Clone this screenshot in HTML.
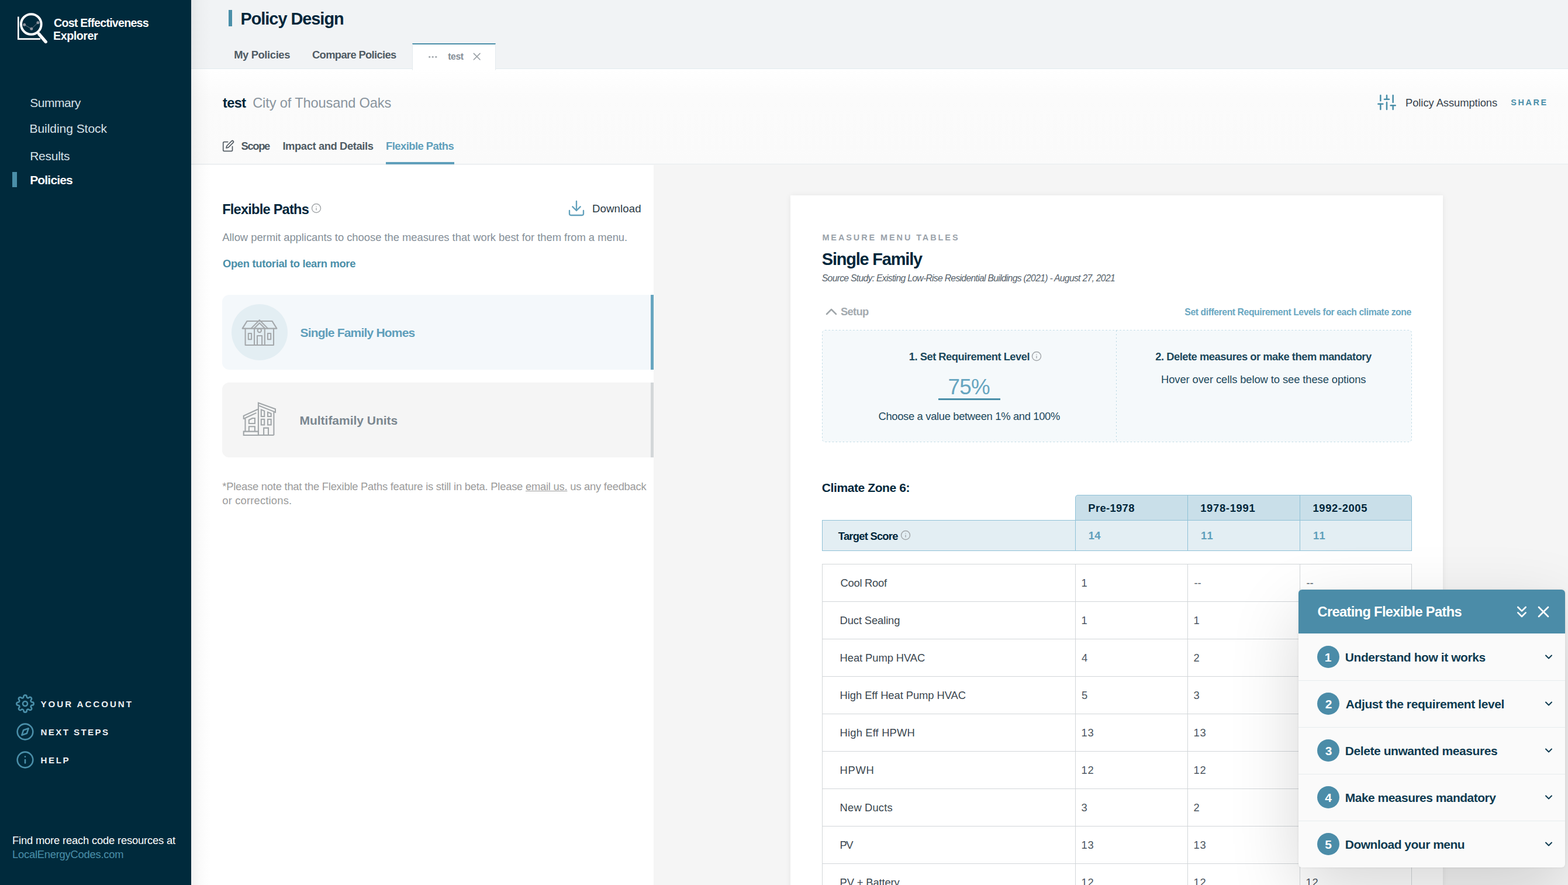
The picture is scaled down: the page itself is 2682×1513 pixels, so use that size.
<!DOCTYPE html>
<html lang="en">
<head>
<meta charset="utf-8">
<title>Policy Design - Cost Effectiveness Explorer</title>
<style>
*{box-sizing:border-box}
html,body{margin:0;padding:0;width:2682px;height:1513px;overflow:hidden;background:#f5f5f5}
.page{position:relative;width:2682px;height:1513px;overflow:hidden;background:#f5f5f5;font-family:"Liberation Sans",sans-serif}
.t{position:absolute;white-space:nowrap;margin:0;padding:0;font-weight:400;text-decoration:none;display:block}
.abs{position:absolute}
ul,ol{list-style:none;margin:0;padding:0}
h1,h2,h3,h4,p{margin:0}
a{color:inherit}
button{font:inherit;border:0;background:none;padding:0;margin:0}
</style>
</head>
<body>
<div class="page">
<header class="abs" style="left:327px;top:0;width:2355px;height:118px;z-index:1;background:#f1f3f5;border-bottom:1px solid #e1eaef"><div style="position:absolute;left:64.00px;top:17.00px;width:6.20px;height:28.00px;background:#4a8fa9;"></div><h1 class="t" style="left:84.50px;top:17.50px;font-size:28.89px;line-height:29px;color:#00263a;font-weight:700;letter-spacing:-1.018px;">Policy Design</h1><nav><a class="t" style="left:73.20px;top:84.00px;font-size:18.39px;line-height:19px;color:#4f5b64;font-weight:700;letter-spacing:-0.387px;">My Policies</a><a class="t" style="left:207.00px;top:84.00px;font-size:18.39px;line-height:19px;color:#4f5b64;font-weight:700;letter-spacing:-0.666px;">Compare Policies</a><div style="position:absolute;left:378.00px;top:74.00px;width:143.00px;height:46.00px;background:#fff;border-top:2.5px solid #4a8fa9;border-left:1px solid #e4eaee;border-right:1px solid #e4eaee;"></div><svg class="abs" style="left:404px;top:92px" width="20" height="10" viewBox="0 0 20 10"><circle cx="3.7" cy="5.3" r="1.6" fill="#a3a9ae"/><circle cx="9.2" cy="5.3" r="1.6" fill="#a3a9ae"/><circle cx="14.8" cy="5.3" r="1.6" fill="#a3a9ae"/></svg><a class="t" style="left:439.30px;top:89.20px;font-size:15.76px;line-height:16px;color:#848e96;font-weight:700;letter-spacing:-0.455px;">test</a><svg style="position:absolute;left:478.00px;top:86.00px;" width="21.33" height="21.33" viewBox="0 0 24 24.000" fill="none" stroke="#9aa1a6" stroke-width="1.9" stroke-linecap="round" stroke-linejoin="round"><line x1="18" y1="6" x2="6" y2="18"/><line x1="6" y1="6" x2="18" y2="18"/></svg></nav></header>
<section class="abs" style="left:327px;top:118px;width:2355px;height:163px;background:linear-gradient(#ffffff 0%,#fbfbfb 30%,#fafafa 100%);border-bottom:1px solid #e6ebee"><h2 class="t" style="left:54.00px;top:45.80px;font-size:23.64px;line-height:24px;color:#00263a;font-weight:700;letter-spacing:-0.649px;">test</h2><div class="t" style="left:105.20px;top:45.80px;font-size:23.64px;line-height:24px;color:#8a959e;letter-spacing:-0.139px;">City of Thousand Oaks</div><nav><svg style="position:absolute;left:53.30px;top:121.30px;" width="21.00" height="21.00" viewBox="0 0 24 24.000" fill="none" stroke="#555e66" stroke-width="2" stroke-linecap="round" stroke-linejoin="round"><path d="M11 4H4a2 2 0 0 0-2 2v14a2 2 0 0 0 2 2h14a2 2 0 0 0 2-2v-7"/><path d="M18.5 2.5a2.121 2.121 0 0 1 3 3L12 15l-4 1 1-4 9.5-9.5z"/></svg><a class="t" style="left:85.50px;top:122.00px;font-size:18.39px;line-height:19px;color:#4f5b64;font-weight:700;letter-spacing:-1.356px;">Scope</a><a class="t" style="left:156.40px;top:122.00px;font-size:18.39px;line-height:19px;color:#4f5b64;font-weight:700;letter-spacing:-0.402px;">Impact and Details</a><a class="t" style="left:333.00px;top:122.00px;font-size:18.39px;line-height:19px;color:#5f9fbb;font-weight:700;letter-spacing:-0.527px;">Flexible Paths</a><div style="position:absolute;left:333.00px;top:159.00px;width:117.00px;height:4.00px;background:#5f9fbb;"></div></nav><svg style="position:absolute;left:2029.00px;top:41.00px;" width="32.00" height="32.00" viewBox="0 0 24 24.000" fill="none" stroke="#4a8fa9" stroke-width="1.9" stroke-linecap="round" stroke-linejoin="round"><line x1="4" y1="21" x2="4" y2="14"/><line x1="4" y1="10" x2="4" y2="3"/><line x1="12" y1="21" x2="12" y2="12"/><line x1="12" y1="8" x2="12" y2="3"/><line x1="20" y1="21" x2="20" y2="16"/><line x1="20" y1="12" x2="20" y2="3"/><line x1="1" y1="14" x2="7" y2="14"/><line x1="9" y1="8" x2="15" y2="8"/><line x1="17" y1="16" x2="23" y2="16"/></svg><a class="t" style="left:2077.00px;top:47.90px;font-size:18.39px;line-height:19px;color:#36424c;letter-spacing:-0.066px;">Policy Assumptions</a><a class="t" style="left:2257.20px;top:50.00px;font-size:14.45px;line-height:15px;color:#4a8fa9;font-weight:700;letter-spacing:2.598px;">SHARE</a></section>
<main>
<section class="abs" style="left:327px;top:281px;width:791px;height:1232px;background:linear-gradient(#f5f5f5 1px,#fff 1px)"><h3 class="t" style="left:53.20px;top:65.10px;font-size:23.64px;line-height:24px;color:#00263a;font-weight:700;letter-spacing:-0.787px;">Flexible Paths</h3><svg style="position:absolute;left:205.40px;top:66.25px;" width="18.00" height="18.00" viewBox="0 0 24 24.000" fill="none" stroke="#a2a6a9" stroke-width="1.9" stroke-linecap="round" stroke-linejoin="round"><circle cx="12" cy="12" r="10"/><line x1="12" y1="16" x2="12" y2="12"/><line x1="12" y1="8" x2="12.01" y2="8"/></svg><svg style="position:absolute;left:643.00px;top:58.50px;" width="32.00" height="32.00" viewBox="0 0 24 24.000" fill="none" stroke="#62a1bc" stroke-width="1.75" stroke-linecap="round" stroke-linejoin="round"><path d="M21 15v4a2 2 0 0 1-2 2H5a2 2 0 0 1-2-2v-4"/><polyline points="7 10 12 15 17 10"/><line x1="12" y1="15" x2="12" y2="3"/></svg><button class="t" style="left:686.00px;top:65.60px;font-size:18.67px;line-height:19px;color:#2b3a45;letter-spacing:0.101px;font-family:'Liberation Sans',sans-serif;">Download</button><p class="t" style="left:53.30px;top:115.00px;font-size:18.39px;line-height:19px;color:#858f98;letter-spacing:-0.020px;">Allow permit applicants to choose the measures that work best for them from a menu.</p><a class="t" style="left:54.00px;top:159.90px;font-size:18.39px;line-height:19px;color:#4a8fa9;font-weight:700;letter-spacing:-0.324px;">Open tutorial to learn more</a><ul><li><div style="position:absolute;left:53.25px;top:223.00px;width:737.75px;height:128.00px;background:#f4f8fb;border-radius:12px 0 0 12px;border-right:5px solid #67a6c0;"></div><div style="position:absolute;left:69.00px;top:239.00px;width:96.00px;height:96.00px;background:#e3eef3;border-radius:50%;"></div><svg class="abs" style="left:83px;top:261px" width="68" height="52" viewBox="410 542 68 52" fill="none" stroke="#a4a8ab" stroke-width="2.05" stroke-linejoin="round" stroke-linecap="round"><path d="M422.6 548.9H465.4L473.4 561.6H414.6Z"/><path d="M429.6 561.4L443.8 547.2L458 561.4"/><path d="M435 590V561.2L443.8 552.2L452.8 561.2V590"/><path d="M419.6 561.8V590H468V561.8"/><circle cx="443.8" cy="564.9" r="3.2"/><path d="M440 590V574H448.1V590"/><rect x="424.8" y="570" width="5.3" height="10.3"/><rect x="457.9" y="570" width="5.3" height="10.3"/></svg><a class="t" style="left:186.50px;top:276.50px;font-size:21.01px;line-height:21px;color:#5f9fbb;font-weight:700;letter-spacing:-0.808px;">Single Family Homes</a></li><li><div style="position:absolute;left:53.25px;top:373.00px;width:737.75px;height:128.00px;background:#f5f5f5;border-radius:12px 0 0 12px;border-right:5px solid #d3d7d9;"></div><svg class="abs" style="left:85px;top:403px" width="64" height="64" viewBox="412 684 64 64" fill="none" stroke="#a1a6a9" stroke-width="2.05" stroke-linejoin="miter" stroke-linecap="butt"><path d="M441.9 743.9V688.8L471 699.2V704.9L468.4 704"/><path d="M443.1 693.6L468.4 703.6V743.9"/><path d="M441 699.7L416.7 710.9V715.8H419.5"/><path d="M438.4 705.9L418.6 715"/><path d="M419.5 715.5V737.6"/><path d="M416.7 737.6H441.9V743.9H416.7Z"/><path d="M441.9 743.9H468.4"/><path d="M425.8 718L431.8 715H435.9V723.9H425.8Z"/><path d="M425.8 737.4V729.2H435.9V737.4"/><path d="M446.8 700.4L452.2 702.6V712H446.8Z"/><path d="M458 704.6L463.7 707V712H458Z"/><rect x="446.8" y="716.8" width="5.4" height="9.6"/><rect x="458" y="716.8" width="5.7" height="9.6"/><path d="M451.1 743.9V731.6H459V743.9"/></svg><a class="t" style="left:185.50px;top:426.75px;font-size:21.01px;line-height:21px;color:#7b8790;font-weight:700;letter-spacing:-0.021px;">Multifamily Units</a></li></ul><p class="t" style="left:53.30px;top:541.00px;font-size:18.39px;line-height:19px;color:#9b9b9b;letter-spacing:-0.237px;">*Please note that the Flexible Paths feature is still in beta. Please <a style="text-decoration:underline">email us.</a> us any feedback</p><p class="t" style="left:53.30px;top:565.00px;font-size:18.39px;line-height:19px;color:#9b9b9b;letter-spacing:0.171px;">or corrections.</p></section>
<article class="abs" style="left:1352px;top:334px;width:1116px;height:1260px;background:#fff;box-shadow:0 1px 10px rgba(0,0,0,0.07)"><div class="t" style="left:54.40px;top:65.20px;font-size:14.45px;line-height:15px;color:#9aa2aa;font-weight:700;letter-spacing:2.929px;">MEASURE MENU TABLES</div><h2 class="t" style="left:53.80px;top:95.25px;font-size:28.89px;line-height:29px;color:#00263a;font-weight:700;letter-spacing:-1.156px;">Single Family</h2><p class="t" style="left:53.80px;top:133.75px;font-size:15.76px;line-height:16px;color:#56626b;font-style:italic;letter-spacing:-0.717px;">Source Study: Existing Low-Rise Residential Buildings (2021) - August 27, 2021</p><svg style="position:absolute;left:53.90px;top:182.50px;" width="32.00" height="32.00" viewBox="0 0 24 24.000" fill="none" stroke="#a0a6aa" stroke-width="1.9" stroke-linecap="round" stroke-linejoin="round"><polyline points="18 15 12 9 6 15"/></svg><div class="t" style="left:86.00px;top:188.90px;font-size:18.39px;line-height:19px;color:#a3aaaf;font-weight:700;letter-spacing:-0.705px;">Setup</div><a class="t" style="left:674.30px;top:191.75px;font-size:15.76px;line-height:16px;color:#6aa7c1;font-weight:700;letter-spacing:-0.425px;">Set different Requirement Levels for each climate zone</a><div style="position:absolute;left:54.00px;top:230.00px;width:1009.00px;height:192.00px;background:#f5f9fb;border-radius:5px;"></div><svg class="abs" style="left:54px;top:230px" width="1009" height="192" viewBox="0 0 1009 192" fill="none" stroke="#b4d4e0" stroke-width="1" stroke-dasharray="2 4"><rect x="0.5" y="0.5" width="1008" height="191" rx="5"/><line x1="503.5" y1="1" x2="503.5" y2="191"/></svg><h4 class="t" style="left:202.80px;top:266.25px;font-size:18.39px;line-height:19px;color:#1c485b;font-weight:700;letter-spacing:-0.510px;">1. Set Requirement Level</h4><svg style="position:absolute;left:412.40px;top:266.40px;" width="18.00" height="18.00" viewBox="0 0 24 24.000" fill="none" stroke="#a2a6a9" stroke-width="1.9" stroke-linecap="round" stroke-linejoin="round"><circle cx="12" cy="12" r="10"/><line x1="12" y1="16" x2="12" y2="12"/><line x1="12" y1="8" x2="12.01" y2="8"/></svg><div class="t" style="left:269.50px;top:308.75px;font-size:36.77px;line-height:37px;color:#66a5c0;letter-spacing:-0.697px;">75%</div><div style="position:absolute;left:253.00px;top:347.40px;width:106.00px;height:2.50px;background:#4a8fa9;"></div><p class="t" style="left:150.50px;top:368.25px;font-size:18.39px;line-height:19px;color:#1c485b;letter-spacing:-0.332px;">Choose a value between 1% and 100%</p><h4 class="t" style="left:624.30px;top:266.25px;font-size:18.39px;line-height:19px;color:#1c485b;font-weight:700;letter-spacing:-0.505px;">2. Delete measures or make them mandatory</h4><p class="t" style="left:634.00px;top:305.00px;font-size:18.39px;line-height:19px;color:#1c485b;letter-spacing:-0.094px;">Hover over cells below to see these options</p><h3 class="t" style="left:53.80px;top:489.00px;font-size:21.01px;line-height:21px;color:#00263a;font-weight:700;letter-spacing:-0.405px;">Climate Zone 6:</h3><table class="abs" style="left:54px;top:512px;width:1009px;border-collapse:separate;border-spacing:0;table-layout:fixed"><colgroup><col style="width:433px"><col style="width:193px"><col style="width:192px"><col style="width:191px"></colgroup><thead><tr><td style="height:43px;padding:0"></td><th style="border-top:1px solid #8fc1d7;border-right:1px solid #8fc1d7;background:#c9dfe9;height:43px;padding:0;border-left:1px solid #8fc1d7;border-top-left-radius:5px;"><span class="t" style="left:455.30px;top:12.60px;font-size:18.39px;line-height:19px;color:#00263a;font-weight:700;letter-spacing:0.357px;">Pre-1978</span></th><th style="border-top:1px solid #8fc1d7;border-right:1px solid #8fc1d7;background:#c9dfe9;height:43px;padding:0;"><span class="t" style="left:647.20px;top:12.60px;font-size:18.39px;line-height:19px;color:#00263a;font-weight:700;letter-spacing:0.693px;">1978-1991</span></th><th style="border-top:1px solid #8fc1d7;border-right:1px solid #8fc1d7;background:#c9dfe9;height:43px;padding:0;border-top-right-radius:5px;"><span class="t" style="left:839.50px;top:12.60px;font-size:18.39px;line-height:19px;color:#00263a;font-weight:700;letter-spacing:0.631px;">1992-2005</span></th></tr></thead><tbody><tr><th style="border-top:1px solid #8fc1d7;border-bottom:1px solid #8fc1d7;border-right:1px solid #8fc1d7;background:#e3eef3;height:53px;padding:0;border-right:0;border-left:1px solid #8fc1d7;"><span class="t" style="left:27.80px;top:60.60px;font-size:18.39px;line-height:19px;color:#00263a;font-weight:700;letter-spacing:-0.759px;">Target Score</span><svg style="position:absolute;left:134.40px;top:60.40px;" width="18.00" height="18.00" viewBox="0 0 24 24.000" fill="none" stroke="#a2a6a9" stroke-width="1.9" stroke-linecap="round" stroke-linejoin="round"><circle cx="12" cy="12" r="10"/><line x1="12" y1="16" x2="12" y2="12"/><line x1="12" y1="8" x2="12.01" y2="8"/></svg></th><td style="border-top:1px solid #8fc1d7;border-bottom:1px solid #8fc1d7;border-right:1px solid #8fc1d7;background:#e3eef3;height:53px;padding:0;border-left:1px solid #8fc1d7;"><span class="t" style="left:455.80px;top:60.40px;font-size:18.39px;line-height:19px;color:#5f9fbb;font-weight:700;letter-spacing:0.289px;">14</span></td><td style="border-top:1px solid #8fc1d7;border-bottom:1px solid #8fc1d7;border-right:1px solid #8fc1d7;background:#e3eef3;height:53px;padding:0;"><span class="t" style="left:648.00px;top:60.40px;font-size:18.39px;line-height:19px;color:#5f9fbb;font-weight:700;letter-spacing:1.318px;">11</span></td><td style="border-top:1px solid #8fc1d7;border-bottom:1px solid #8fc1d7;border-right:1px solid #8fc1d7;background:#e3eef3;height:53px;padding:0;"><span class="t" style="left:840.00px;top:60.40px;font-size:18.39px;line-height:19px;color:#5f9fbb;font-weight:700;letter-spacing:1.318px;">11</span></td></tr></tbody></table><table class="abs" style="left:54px;top:630px;width:1009px;border-collapse:separate;border-spacing:0;table-layout:fixed;border-top:1px solid #d2d6d9;border-left:1px solid #d2d6d9"><colgroup><col style="width:433px"><col style="width:192px"><col style="width:192px"><col style="width:191px"></colgroup><tbody><tr><th style="border-right:1px solid #d2d6d9;border-bottom:1px solid #d2d6d9;height:64px;padding:0;"><span class="t" style="left:30.60px;top:22.10px;font-size:18.39px;line-height:19px;color:#3b4750;letter-spacing:-0.276px;">Cool Roof</span></th><td style="border-right:1px solid #d2d6d9;border-bottom:1px solid #d2d6d9;height:64px;padding:0;"><span class="t" style="left:442.60px;top:22.10px;font-size:18.39px;line-height:19px;color:#4c5660;">1</span></td><td style="border-right:1px solid #d2d6d9;border-bottom:1px solid #d2d6d9;height:64px;padding:0;"><span class="t" style="left:635.60px;top:22.10px;font-size:18.39px;line-height:19px;color:#4c5660;letter-spacing:-0.188px;">--</span></td><td style="border-right:1px solid #d2d6d9;border-bottom:1px solid #d2d6d9;height:64px;padding:0;"><span class="t" style="left:827.60px;top:22.10px;font-size:18.39px;line-height:19px;color:#4c5660;letter-spacing:-0.188px;">--</span></td></tr><tr><th style="border-right:1px solid #d2d6d9;border-bottom:1px solid #d2d6d9;height:64px;padding:0;"><span class="t" style="left:29.60px;top:86.10px;font-size:18.39px;line-height:19px;color:#3b4750;letter-spacing:-0.124px;">Duct Sealing</span></th><td style="border-right:1px solid #d2d6d9;border-bottom:1px solid #d2d6d9;height:64px;padding:0;"><span class="t" style="left:442.60px;top:86.10px;font-size:18.39px;line-height:19px;color:#4c5660;">1</span></td><td style="border-right:1px solid #d2d6d9;border-bottom:1px solid #d2d6d9;height:64px;padding:0;"><span class="t" style="left:634.60px;top:86.10px;font-size:18.39px;line-height:19px;color:#4c5660;">1</span></td><td style="border-right:1px solid #d2d6d9;border-bottom:1px solid #d2d6d9;height:64px;padding:0;"><span class="t" style="left:826.60px;top:86.10px;font-size:18.39px;line-height:19px;color:#4c5660;">1</span></td></tr><tr><th style="border-right:1px solid #d2d6d9;border-bottom:1px solid #d2d6d9;height:64px;padding:0;"><span class="t" style="left:29.60px;top:150.10px;font-size:18.39px;line-height:19px;color:#3b4750;letter-spacing:-0.080px;">Heat Pump HVAC</span></th><td style="border-right:1px solid #d2d6d9;border-bottom:1px solid #d2d6d9;height:64px;padding:0;"><span class="t" style="left:443.10px;top:150.10px;font-size:18.39px;line-height:19px;color:#4c5660;">4</span></td><td style="border-right:1px solid #d2d6d9;border-bottom:1px solid #d2d6d9;height:64px;padding:0;"><span class="t" style="left:634.60px;top:150.10px;font-size:18.39px;line-height:19px;color:#4c5660;">2</span></td><td style="border-right:1px solid #d2d6d9;border-bottom:1px solid #d2d6d9;height:64px;padding:0;"><span class="t" style="left:826.60px;top:150.10px;font-size:18.39px;line-height:19px;color:#4c5660;">2</span></td></tr><tr><th style="border-right:1px solid #d2d6d9;border-bottom:1px solid #d2d6d9;height:64px;padding:0;"><span class="t" style="left:29.60px;top:214.10px;font-size:18.39px;line-height:19px;color:#3b4750;letter-spacing:-0.063px;">High Eff Heat Pump HVAC</span></th><td style="border-right:1px solid #d2d6d9;border-bottom:1px solid #d2d6d9;height:64px;padding:0;"><span class="t" style="left:443.10px;top:214.10px;font-size:18.39px;line-height:19px;color:#4c5660;">5</span></td><td style="border-right:1px solid #d2d6d9;border-bottom:1px solid #d2d6d9;height:64px;padding:0;"><span class="t" style="left:634.60px;top:214.10px;font-size:18.39px;line-height:19px;color:#4c5660;">3</span></td><td style="border-right:1px solid #d2d6d9;border-bottom:1px solid #d2d6d9;height:64px;padding:0;"><span class="t" style="left:826.60px;top:214.10px;font-size:18.39px;line-height:19px;color:#4c5660;">3</span></td></tr><tr><th style="border-right:1px solid #d2d6d9;border-bottom:1px solid #d2d6d9;height:64px;padding:0;"><span class="t" style="left:29.60px;top:278.10px;font-size:18.39px;line-height:19px;color:#3b4750;letter-spacing:0.157px;">High Eff HPWH</span></th><td style="border-right:1px solid #d2d6d9;border-bottom:1px solid #d2d6d9;height:64px;padding:0;"><span class="t" style="left:442.60px;top:278.10px;font-size:18.39px;line-height:19px;color:#4c5660;letter-spacing:0.601px;">13</span></td><td style="border-right:1px solid #d2d6d9;border-bottom:1px solid #d2d6d9;height:64px;padding:0;"><span class="t" style="left:634.60px;top:278.10px;font-size:18.39px;line-height:19px;color:#4c5660;letter-spacing:0.601px;">13</span></td><td style="border-right:1px solid #d2d6d9;border-bottom:1px solid #d2d6d9;height:64px;padding:0;"><span class="t" style="left:826.60px;top:278.10px;font-size:18.39px;line-height:19px;color:#4c5660;letter-spacing:0.601px;">13</span></td></tr><tr><th style="border-right:1px solid #d2d6d9;border-bottom:1px solid #d2d6d9;height:64px;padding:0;"><span class="t" style="left:29.60px;top:342.10px;font-size:18.39px;line-height:19px;color:#3b4750;letter-spacing:0.682px;">HPWH</span></th><td style="border-right:1px solid #d2d6d9;border-bottom:1px solid #d2d6d9;height:64px;padding:0;"><span class="t" style="left:442.60px;top:342.10px;font-size:18.39px;line-height:19px;color:#4c5660;letter-spacing:0.601px;">12</span></td><td style="border-right:1px solid #d2d6d9;border-bottom:1px solid #d2d6d9;height:64px;padding:0;"><span class="t" style="left:634.60px;top:342.10px;font-size:18.39px;line-height:19px;color:#4c5660;letter-spacing:0.601px;">12</span></td><td style="border-right:1px solid #d2d6d9;border-bottom:1px solid #d2d6d9;height:64px;padding:0;"><span class="t" style="left:826.60px;top:342.10px;font-size:18.39px;line-height:19px;color:#4c5660;letter-spacing:0.601px;">12</span></td></tr><tr><th style="border-right:1px solid #d2d6d9;border-bottom:1px solid #d2d6d9;height:64px;padding:0;"><span class="t" style="left:29.60px;top:406.10px;font-size:18.39px;line-height:19px;color:#3b4750;letter-spacing:0.148px;">New Ducts</span></th><td style="border-right:1px solid #d2d6d9;border-bottom:1px solid #d2d6d9;height:64px;padding:0;"><span class="t" style="left:442.60px;top:406.10px;font-size:18.39px;line-height:19px;color:#4c5660;">3</span></td><td style="border-right:1px solid #d2d6d9;border-bottom:1px solid #d2d6d9;height:64px;padding:0;"><span class="t" style="left:634.60px;top:406.10px;font-size:18.39px;line-height:19px;color:#4c5660;">2</span></td><td style="border-right:1px solid #d2d6d9;border-bottom:1px solid #d2d6d9;height:64px;padding:0;"><span class="t" style="left:826.60px;top:406.10px;font-size:18.39px;line-height:19px;color:#4c5660;">2</span></td></tr><tr><th style="border-right:1px solid #d2d6d9;border-bottom:1px solid #d2d6d9;height:64px;padding:0;"><span class="t" style="left:29.60px;top:470.10px;font-size:18.39px;line-height:19px;color:#3b4750;letter-spacing:-1.548px;">PV</span></th><td style="border-right:1px solid #d2d6d9;border-bottom:1px solid #d2d6d9;height:64px;padding:0;"><span class="t" style="left:442.60px;top:470.10px;font-size:18.39px;line-height:19px;color:#4c5660;letter-spacing:0.601px;">13</span></td><td style="border-right:1px solid #d2d6d9;border-bottom:1px solid #d2d6d9;height:64px;padding:0;"><span class="t" style="left:634.60px;top:470.10px;font-size:18.39px;line-height:19px;color:#4c5660;letter-spacing:0.601px;">13</span></td><td style="border-right:1px solid #d2d6d9;border-bottom:1px solid #d2d6d9;height:64px;padding:0;"><span class="t" style="left:826.60px;top:470.10px;font-size:18.39px;line-height:19px;color:#4c5660;letter-spacing:0.601px;">13</span></td></tr><tr><th style="border-right:1px solid #d2d6d9;border-bottom:1px solid #d2d6d9;height:64px;padding:0;"><span class="t" style="left:29.60px;top:534.10px;font-size:18.39px;line-height:19px;color:#3b4750;letter-spacing:-0.143px;">PV + Battery</span></th><td style="border-right:1px solid #d2d6d9;border-bottom:1px solid #d2d6d9;height:64px;padding:0;"><span class="t" style="left:442.60px;top:534.10px;font-size:18.39px;line-height:19px;color:#4c5660;letter-spacing:0.601px;">12</span></td><td style="border-right:1px solid #d2d6d9;border-bottom:1px solid #d2d6d9;height:64px;padding:0;"><span class="t" style="left:634.60px;top:534.10px;font-size:18.39px;line-height:19px;color:#4c5660;letter-spacing:0.601px;">12</span></td><td style="border-right:1px solid #d2d6d9;border-bottom:1px solid #d2d6d9;height:64px;padding:0;"><span class="t" style="left:826.60px;top:534.10px;font-size:18.39px;line-height:19px;color:#4c5660;letter-spacing:0.601px;">12</span></td></tr></tbody></table></article>
</main>
<div class="abs" style="left:327px;top:0;width:34px;height:1513px;z-index:2;background:linear-gradient(to right,rgba(0,0,0,0.055),rgba(0,0,0,0.02) 40%,rgba(0,0,0,0));pointer-events:none"></div>
<aside class="abs" style="left:0;top:0;width:327px;height:1513px;z-index:3;background:#002a3c"><svg class="abs" style="left:24px;top:16px" width="64" height="64" viewBox="24 16 64 64" fill="none" stroke-linecap="round" stroke-linejoin="round"><polyline points="31.3,28.6 31.3,66.6 69,66.6" stroke="#fff" stroke-width="2.6" stroke-linecap="butt" stroke-linejoin="miter"/><polyline points="41.7,42.3 53.8,49.2 64.9,38.8" stroke="#7d8791" stroke-width="0.9"/><circle cx="41.7" cy="42.3" r="2.5" fill="#8d929c"/><circle cx="53.8" cy="49.2" r="2.5" fill="#8d929c"/><circle cx="64.9" cy="38.8" r="2.5" fill="#8d929c"/><circle cx="53.3" cy="41.5" r="17.3" stroke="#fff" stroke-width="4"/><line x1="66.8" y1="58.2" x2="78.2" y2="71.4" stroke="#fff" stroke-width="5.4"/></svg><div class="t" style="left:92.00px;top:28.60px;font-size:19.70px;line-height:20px;color:#fff;font-weight:700;letter-spacing:-0.795px;">Cost Effectiveness</div><div class="t" style="left:91.00px;top:50.70px;font-size:19.70px;line-height:20px;color:#fff;font-weight:700;letter-spacing:-0.459px;">Explorer</div><nav><ul><li><a class="t" style="left:51.20px;top:165.20px;font-size:21.01px;line-height:21px;color:#d6e1e8;letter-spacing:-0.457px;">Summary</a></li><li><a class="t" style="left:50.50px;top:209.00px;font-size:21.01px;line-height:21px;color:#d6e1e8;letter-spacing:-0.044px;">Building Stock</a></li><li><a class="t" style="left:51.20px;top:256.00px;font-size:21.01px;line-height:21px;color:#d6e1e8;letter-spacing:-0.271px;">Results</a></li><li><div style="position:absolute;left:21.00px;top:294.00px;width:8.00px;height:26.00px;background:#4a8fa9;"></div><a class="t" style="left:51.20px;top:297.00px;font-size:21.01px;line-height:21px;color:#fff;font-weight:700;letter-spacing:-0.828px;">Policies</a></li></ul></nav><ul><li><svg style="position:absolute;left:27.00px;top:1187.00px;" width="32.00" height="32.00" viewBox="0 0 24 24.000" fill="none" stroke="#4a8fa9" stroke-width="1.95" stroke-linecap="round" stroke-linejoin="round"><circle cx="12" cy="12" r="3"/><path d="M19.4 15a1.65 1.65 0 0 0 .33 1.82l.06.06a2 2 0 0 1 0 2.83 2 2 0 0 1-2.83 0l-.06-.06a1.65 1.65 0 0 0-1.82-.33 1.65 1.65 0 0 0-1 1.51V21a2 2 0 0 1-2 2 2 2 0 0 1-2-2v-.09A1.65 1.65 0 0 0 9 19.4a1.65 1.65 0 0 0-1.82.33l-.06.06a2 2 0 0 1-2.83 0 2 2 0 0 1 0-2.83l.06-.06a1.65 1.65 0 0 0 .33-1.82 1.65 1.65 0 0 0-1.51-1H3a2 2 0 0 1-2-2 2 2 0 0 1 2-2h.09A1.65 1.65 0 0 0 4.6 9a1.65 1.65 0 0 0-.33-1.82l-.06-.06a2 2 0 0 1 0-2.83 2 2 0 0 1 2.83 0l.06.06a1.65 1.65 0 0 0 1.82.33H9a1.65 1.65 0 0 0 1-1.51V3a2 2 0 0 1 2-2 2 2 0 0 1 2 2v.09a1.65 1.65 0 0 0 1 1.51 1.65 1.65 0 0 0 1.82-.33l.06-.06a2 2 0 0 1 2.83 0 2 2 0 0 1 0 2.83l-.06.06a1.65 1.65 0 0 0-.33 1.82V9a1.65 1.65 0 0 0 1.51 1H21a2 2 0 0 1 2 2 2 2 0 0 1-2 2h-.09a1.65 1.65 0 0 0-1.51 1z"/></svg><a class="t" style="left:69.60px;top:1196.20px;font-size:15.17px;line-height:15px;color:#eef2f5;font-weight:700;letter-spacing:2.917px;">YOUR ACCOUNT</a></li><li><svg style="position:absolute;left:27.00px;top:1235.00px;" width="32.00" height="32.00" viewBox="0 0 24 24.000" fill="none" stroke="#4a8fa9" stroke-width="1.95" stroke-linecap="round" stroke-linejoin="round"><circle cx="12" cy="12" r="10"/><polygon points="16.24 7.76 14.12 14.12 7.76 16.24 9.88 9.88 16.24 7.76"/></svg><a class="t" style="left:69.40px;top:1243.90px;font-size:15.17px;line-height:15px;color:#eef2f5;font-weight:700;letter-spacing:2.376px;">NEXT STEPS</a></li><li><svg style="position:absolute;left:27.00px;top:1283.00px;" width="32.00" height="32.00" viewBox="0 0 24 24.000" fill="none" stroke="#4a8fa9" stroke-width="1.95" stroke-linecap="round" stroke-linejoin="round"><circle cx="12" cy="12" r="10"/><line x1="12" y1="16" x2="12" y2="12"/><line x1="12" y1="8" x2="12.01" y2="8"/></svg><a class="t" style="left:69.40px;top:1292.00px;font-size:15.17px;line-height:15px;color:#eef2f5;font-weight:700;letter-spacing:2.629px;">HELP</a></li></ul><p class="t" style="left:21.00px;top:1427.30px;font-size:18.39px;line-height:19px;color:#fff;letter-spacing:-0.183px;">Find more reach code resources at</p><a class="t" style="left:21.00px;top:1451.00px;font-size:18.39px;line-height:19px;color:#4a8fa9;letter-spacing:-0.241px;">LocalEnergyCodes.com</a></aside>
<aside class="abs" style="left:2221px;top:1008px;width:456px;height:475px;z-index:4;border-radius:6px;background:#fafafa;box-shadow:0 40px 120px rgba(0,0,0,0.16),0 0 4px rgba(0,0,0,0.08);overflow:hidden"><header class="abs" style="left:0;top:0;width:456px;height:75px;background:#4b8ca8"><h3 class="t" style="left:32.50px;top:25.75px;font-size:23.64px;line-height:24px;color:#fff;font-weight:700;letter-spacing:-0.642px;">Creating Flexible Paths</h3><svg style="position:absolute;left:365.90px;top:22.00px;" width="32.00" height="32.00" viewBox="0 0 24 24.000" fill="none" stroke="#fff" stroke-width="2" stroke-linecap="round" stroke-linejoin="round"><polyline points="7 13 12 18 17 13"/><polyline points="7 6 12 11 17 6"/></svg><svg style="position:absolute;left:403.10px;top:22.00px;" width="32.00" height="32.00" viewBox="0 0 24 24.000" fill="none" stroke="#fff" stroke-width="2" stroke-linecap="round" stroke-linejoin="round"><line x1="18" y1="6" x2="6" y2="18"/><line x1="6" y1="6" x2="18" y2="18"/></svg></header><ol><li class="abs" style="left:0;top:75px;width:456px;height:80px"><div style="position:absolute;left:32.00px;top:21.00px;width:38.00px;height:38.00px;background:#4b8ca8;border-radius:50%;"></div><span class="t" style="left:44.70px;top:29.90px;font-size:21.01px;line-height:21px;color:#fff;font-weight:700;">1</span><span class="t" style="left:79.80px;top:29.90px;font-size:21.01px;line-height:21px;color:#0d3a50;font-weight:700;letter-spacing:-0.423px;">Understand how it works</span><svg style="position:absolute;left:417.75px;top:29.90px;" width="20.00" height="20.00" viewBox="0 0 24 24.000" fill="none" stroke="#0d3a50" stroke-width="2.4" stroke-linecap="round" stroke-linejoin="round"><polyline points="6 9 12 15 18 9"/></svg></li><li class="abs" style="left:0;top:155px;width:456px;height:80px"><div class="abs" style="left:0;top:0;width:456px;height:1px;background:#e7ecee"></div><div style="position:absolute;left:32.00px;top:21.00px;width:38.00px;height:38.00px;background:#4b8ca8;border-radius:50%;"></div><span class="t" style="left:45.70px;top:29.90px;font-size:21.01px;line-height:21px;color:#fff;font-weight:700;">2</span><span class="t" style="left:80.80px;top:29.90px;font-size:21.01px;line-height:21px;color:#0d3a50;font-weight:700;letter-spacing:-0.403px;">Adjust the requirement level</span><svg style="position:absolute;left:417.75px;top:29.90px;" width="20.00" height="20.00" viewBox="0 0 24 24.000" fill="none" stroke="#0d3a50" stroke-width="2.4" stroke-linecap="round" stroke-linejoin="round"><polyline points="6 9 12 15 18 9"/></svg></li><li class="abs" style="left:0;top:235px;width:456px;height:80px"><div class="abs" style="left:0;top:0;width:456px;height:1px;background:#e7ecee"></div><div style="position:absolute;left:32.00px;top:21.00px;width:38.00px;height:38.00px;background:#4b8ca8;border-radius:50%;"></div><span class="t" style="left:45.70px;top:29.90px;font-size:21.01px;line-height:21px;color:#fff;font-weight:700;">3</span><span class="t" style="left:79.80px;top:29.90px;font-size:21.01px;line-height:21px;color:#0d3a50;font-weight:700;letter-spacing:-0.430px;">Delete unwanted measures</span><svg style="position:absolute;left:417.75px;top:29.90px;" width="20.00" height="20.00" viewBox="0 0 24 24.000" fill="none" stroke="#0d3a50" stroke-width="2.4" stroke-linecap="round" stroke-linejoin="round"><polyline points="6 9 12 15 18 9"/></svg></li><li class="abs" style="left:0;top:315px;width:456px;height:80px"><div class="abs" style="left:0;top:0;width:456px;height:1px;background:#e7ecee"></div><div style="position:absolute;left:32.00px;top:21.00px;width:38.00px;height:38.00px;background:#4b8ca8;border-radius:50%;"></div><span class="t" style="left:45.20px;top:29.90px;font-size:21.01px;line-height:21px;color:#fff;font-weight:700;">4</span><span class="t" style="left:79.80px;top:29.90px;font-size:21.01px;line-height:21px;color:#0d3a50;font-weight:700;letter-spacing:-0.525px;">Make measures mandatory</span><svg style="position:absolute;left:417.75px;top:29.90px;" width="20.00" height="20.00" viewBox="0 0 24 24.000" fill="none" stroke="#0d3a50" stroke-width="2.4" stroke-linecap="round" stroke-linejoin="round"><polyline points="6 9 12 15 18 9"/></svg></li><li class="abs" style="left:0;top:395px;width:456px;height:80px"><div class="abs" style="left:0;top:0;width:456px;height:1px;background:#e7ecee"></div><div style="position:absolute;left:32.00px;top:21.00px;width:38.00px;height:38.00px;background:#4b8ca8;border-radius:50%;"></div><span class="t" style="left:45.20px;top:29.90px;font-size:21.01px;line-height:21px;color:#fff;font-weight:700;">5</span><span class="t" style="left:79.80px;top:29.90px;font-size:21.01px;line-height:21px;color:#0d3a50;font-weight:700;letter-spacing:-0.511px;">Download your menu</span><svg style="position:absolute;left:417.75px;top:29.90px;" width="20.00" height="20.00" viewBox="0 0 24 24.000" fill="none" stroke="#0d3a50" stroke-width="2.4" stroke-linecap="round" stroke-linejoin="round"><polyline points="6 9 12 15 18 9"/></svg></li></ol></aside>
</div>
</body>
</html>
